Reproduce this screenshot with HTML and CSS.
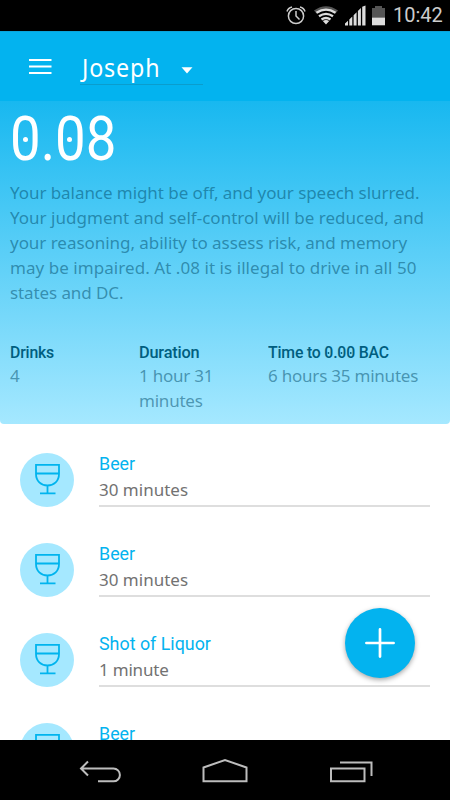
FILE: index.html
```html
<!DOCTYPE html>
<html lang="en">
<head>
<meta charset="utf-8">
<title>Blood alcohol tracker</title>
<link rel="stylesheet" href="styles.css">
</head>
<body>
<svg class="defs" width="0" height="0">
  <symbol id="glass" viewBox="0 0 54 54"><g fill="none" stroke="#00b4ee" stroke-width="1.8"><path d="M16 11.9H39V21C39 28 34 32.5 27.5 32.5S16 28 16 21ZM16 20.5H39M27.5 32.5V40.3M20 40.3H35.5"/></g></symbol>
</svg>
<div class="phone">
  <div class="status">
    <svg width="120" height="31" viewBox="270 0 120 31">
      <g fill="none" stroke="#ccc" stroke-width="1.5"><circle cx="296" cy="16" r="7.6"/><path d="M296 11V16L299.5 19.5M287 11.5Q288 8 292 7M300 7Q304 8 305 11.5"/></g>
      <path fill="#555" d="M314 10.5Q326 2 338 10.5L335.5 13.5Q326 7.5 316.500 13.5Z"/>
      <g fill="none" stroke="#ddd" stroke-width="2.3"><path d="M316.500 12.800Q326 6.500 335.500 12.800M319 16.300Q326 11.500 333 16.300M321.500 19.500Q326 16.500 330.500 19.500"/></g>
      <path fill="#ddd" d="M326 24.500L322.800 21Q326 19 329.200 21ZM345 25.500V23.600L348 20.700V25.500ZM349.300 25.500V19.400L352.300 16.500V25.500ZM353.600 25.500V15.200L356.600 12.300V25.500ZM357.900 25.500V11L360.900 8.100V25.500ZM362.200 25.500V6.800L365.500 5.500V25.500Z"/>
      <path fill="#555" d="M372 8H375V6H382V8H385V17.500H372Z"/><path fill="#ddd" d="M372 17.500H385V25.300H372Z"/>
    </svg>
    <span class="clock">10:42</span>
  </div>
  <header class="toolbar">
    <svg class="menu" width="24" height="18" viewBox="0 0 24 18"><path stroke="#fff" stroke-width="2" d="M1 2H23.500M1 8.500H23.500M1 15H23.500"/></svg>
    <div class="picker"><span class="name">Joseph</span><svg width="12" height="7" viewBox="0 0 12 7"><path fill="#fff" d="M.5.300H11.500L6 6.500Z"/></svg></div>
  </header>
  <section class="summary">
    <div class="level"><span>0.08</span><i class="dot first"></i><i class="dot second"></i></div>
    <p class="advice"><span class="a1">Your balance might be off, and your speech slurred.</span><span class="a2">Your judgment and self-control will be reduced, and</span><span class="a3">your reasoning, ability to assess risk, and memory</span><span class="a4">may be impaired. At .08 it is illegal to drive in all 50</span><span class="a5">states and DC.</span></p>
    <div class="stats">
      <div><h3>Drinks</h3><p>4</p></div>
      <div><h3 class="mid">Duration</h3><p>1 hour 31<br>minutes</p></div>
      <div><h3>Time to <span class="zero">0</span>.<span class="zero">0</span><span class="zero">0</span> BAC</h3><p>6 hours 35 minutes</p></div>
    </div>
  </section>
  <main class="list">
    <div class="row"><div class="avatar"><svg width="54" height="54"><use href="#glass"/></svg></div><div class="info"><h2>Beer</h2><p>30 minutes</p></div></div>
    <div class="row"><div class="avatar"><svg width="54" height="54"><use href="#glass"/></svg></div><div class="info"><h2>Beer</h2><p>30 minutes</p></div></div>
    <div class="row"><div class="avatar"><svg width="54" height="54"><use href="#glass"/></svg></div><div class="info"><h2>Shot of Liquor</h2><p class="single">1 minute</p></div></div>
    <div class="row"><div class="avatar"><svg width="54" height="54"><use href="#glass"/></svg></div><div class="info"><h2>Beer</h2></div></div>
  </main>
  <button class="fab" aria-label="Add drink"><svg width="30" height="30" viewBox="0 0 30 30"><path stroke="#fff" stroke-width="2.700" stroke-linecap="round" d="M1.400 15H28.600M15 1.400V28.600"/></svg></button>
  <nav class="nav">
    <svg width="450" height="60" viewBox="0 740 450 60"><g fill="none" stroke="#bdbdbd" stroke-width="2"><path d="M88 761.500L81 768.500L88 775.500M81 768.500H113.500A6.300 6.300 0 0 1 113.500 781.300H98M203.500 767.500L225 760L246.500 767.500V781.300H203.500ZM331 768.500H364.500V781.300H331ZM340 762.500H371.500V776"/></g></svg>
  </nav>
</div>
</body>
</html>
```

FILE: styles.css
```css
* { box-sizing: border-box; margin: 0; padding: 0; }
body { background: #fff; font-family: "Noto Sans", sans-serif; }
.defs { position: absolute; }
.phone { position: relative; display: flex; flex-direction: column; width: 450px; height: 800px; overflow: hidden; }
.status { display: flex; flex: 0 0 31px; height: 31px; min-height: 0; padding-left: 270px; background: #000; }
.status svg { flex: none; }
.clock { padding-left: 3px; font: 20px/31px Roboto, sans-serif; color: #ccc; white-space: nowrap; }
.toolbar { display: flex; flex: 0 0 70px; background: #03b3ef; border-top: 1px solid #0aa5dc; }
.menu { margin: 26px 28px 0 28px; }
.picker { display: flex; align-items: center; justify-content: space-between; width: 123px; height: 53px; padding: 18px 10px 0 2px; border-bottom: 1px solid #0a9dcd; }
.name { width: 82px; font-size: 25px; line-height: 32px; letter-spacing: .9px; color: #fff; transform: scaleX(.93); transform-origin: left; }
.picker svg { margin-top: 6px; }
.summary { flex: 0 0 323px; padding: 0 10px; background: linear-gradient(#18b8f0, #a5e8ff); border-radius: 0 0 4px 4px; }
.level { position: relative; height: 79px; font: 62px/76px Roboto, sans-serif; color: #fff; }
.level span { display: inline-block; transform: scaleX(.88); transform-origin: left; }
.dot { position: absolute; top: 36px; width: 5px; height: 5px; border-radius: 50%; background: #fff; }
.first { left: 13px; }
.second { left: 57px; }
.advice { font-size: 17px; line-height: 25px; color: rgba(0, 75, 105, .52); white-space: nowrap; }
.advice span { display: block; }
.a1 { letter-spacing: -.06px; }
.a2 { letter-spacing: .02px; }
.a3 { letter-spacing: -.04px; }
.a4 { letter-spacing: .055px; }
.a5 { letter-spacing: -.1px; }
.stats { display: grid; grid-template-columns: 129px 129px 1fr; margin-top: 34px; }
.stats h3 { height: 24px; font: 500 17px/26px Roboto, sans-serif; color: #005e7f; letter-spacing: -.2px; white-space: nowrap; transform: scaleX(.93); transform-origin: left; }
.stats .mid { transform: scaleX(.96); }
.zero { position: relative; }
.zero::after { content: ""; position: absolute; left: calc(50% - 1px); top: 10px; width: 2px; height: 2px; border-radius: 50%; background: #005e7f; }
.stats p { font-size: 17px; line-height: 25px; letter-spacing: -.22px; color: rgba(0, 75, 105, .52); white-space: nowrap; }
.list { flex: 0 0 316px; padding: 29px 20px 0; overflow: hidden; }
.row { display: flex; gap: 25px; height: 90px; }
.avatar { flex: none; width: 54px; height: 54px; border-radius: 50%; background: #a5e8ff; }
.info { flex: 1; height: 54px; border-bottom: 2px solid #dedede; }
.info h2 { height: 23px; font: 400 19px/22px Roboto, sans-serif; color: #03b3ef; white-space: nowrap; transform: scaleX(.94); transform-origin: left; }
.info p { font-size: 17px; line-height: 27px; color: #727272; }
.info .single { letter-spacing: -.2px; }
.fab { position: absolute; left: 345px; top: 607.5px; display: grid; place-items: center; width: 70px; height: 70px; border: 0; border-radius: 50%; background: #03b3ef; box-shadow: 0 2px 5px rgba(0, 0, 0, .35); }
.nav { flex: 0 0 60px; background: #000; }
```
